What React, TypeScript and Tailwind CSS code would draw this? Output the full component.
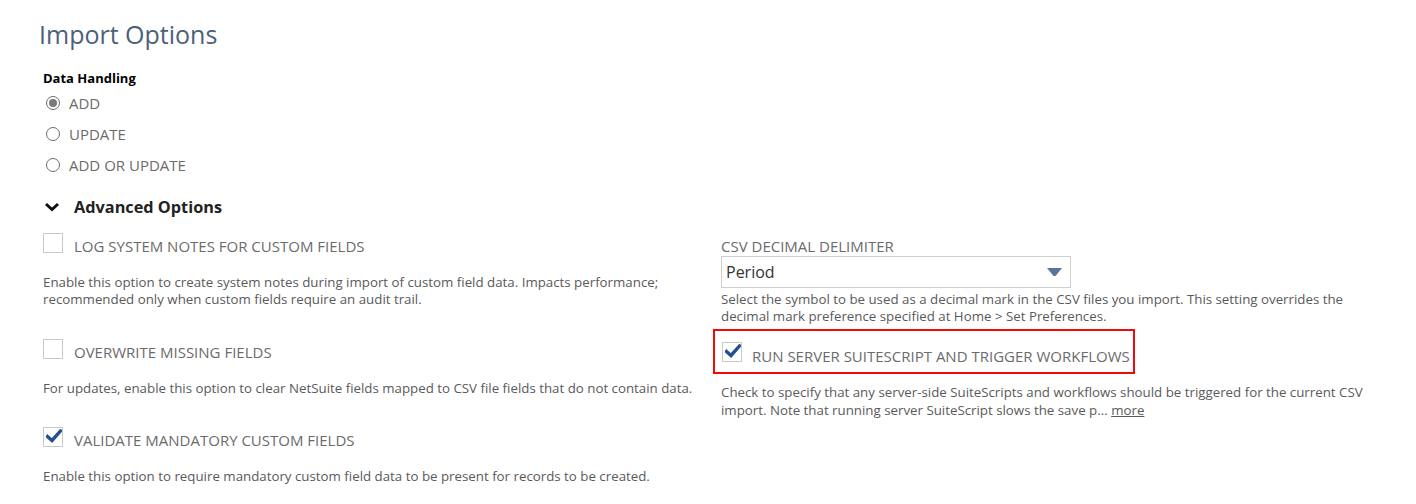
import React from "react";

const CheckIcon = () => (
  <svg width="16" height="14" viewBox="0 0 16 14" className="block">
    <path d="M1.5 7.5 L6 11.5 L14.5 2" fill="none" stroke="#245193" strokeWidth="3.4" strokeLinecap="square" strokeLinejoin="miter" />
  </svg>
);

const Checkbox = ({ checked }: { checked?: boolean }) => (
  <span className="w-[20px] h-[20px] shrink-0 border border-[#c9c9c9] bg-white flex items-start justify-center pt-[1px] pl-[1px]">
    {checked && <CheckIcon />}
  </span>
);

const Radio = ({ checked, label }: { checked?: boolean; label: string }) => (
  <div className="flex items-center h-[31px]">
    <span className="w-[14px] h-[14px] ml-[3px] rounded-full border border-[#6b6b6b] bg-white flex items-center justify-center">
      {checked && <span className="w-[8px] h-[8px] rounded-full bg-[#7a7a7a]" />}
    </span>
    <span className="ml-[9px] text-[15px] text-[#6b6b6b] leading-[20px]">{label}</span>
  </div>
);

const CheckField = ({ checked, label, desc, gap }: { checked?: boolean; label: string; desc: string; gap: string }) => (
  <div className={gap}>
    <div className="flex items-start h-[26px]">
      <Checkbox checked={checked} />
      <span className="ml-[11px] text-[15px] leading-[26px] text-[#6b6b6b]">{label}</span>
    </div>
    <p className="mt-[15px] text-[13.3px] leading-[17px] text-[#5a5a5a]">{desc}</p>
  </div>
);

export default function App() {
  return (
    <div className="w-[1416px] h-[504px] bg-white overflow-hidden pl-[43px] pr-[40px]" style={{ fontFamily: '"Open Sans", sans-serif' }}>
      <h1 className="-ml-[4px] pt-[17px] text-[25px] leading-[34px] text-[#4d5f79] font-normal">Import Options</h1>

      <div className="mt-[18px] text-[13px] leading-[18px] font-bold text-black">Data Handling</div>
      <div>
        <Radio checked label="ADD" />
        <Radio label="UPDATE" />
        <Radio label="ADD OR UPDATE" />
      </div>

      <div className="flex items-center h-[24px] mt-[15px]">
        <svg width="16" height="10" viewBox="0 0 16 10" className="ml-[1px]">
          <path d="M2 2 L8 7.5 L14 2" fill="none" stroke="#111" strokeWidth="3" />
        </svg>
        <span className="ml-[14px] text-[16.3px] font-bold text-[#222]">Advanced Options</span>
      </div>

      <div className="grid grid-cols-[678px_1fr] mt-[14px]">
        <div>
          <CheckField
            gap="mb-[31px]"
            label="LOG SYSTEM NOTES FOR CUSTOM FIELDS"
            desc="Enable this option to create system notes during import of custom field data. Impacts performance; recommended only when custom fields require an audit trail."
          />
          <CheckField
            gap="mb-[30px]"
            label="OVERWRITE MISSING FIELDS"
            desc="For updates, enable this option to clear NetSuite fields mapped to CSV file fields that do not contain data."
          />
          <CheckField
            gap="mb-[30px]"
            checked
            label="VALIDATE MANDATORY CUSTOM FIELDS"
            desc="Enable this option to require mandatory custom field data to be present for records to be created."
          />
        </div>

        <div className="mt-[3px]">
          <div className="text-[15px] leading-[20px] text-[#6b6b6b]">CSV DECIMAL DELIMITER</div>
          <div className="w-[350px] h-[32px] border border-[#cfcfcf] flex items-center justify-between pl-[4px] pr-[8px]">
            <span className="text-[16px] text-[#333]">Period</span>
            <svg width="15" height="8" viewBox="0 0 15 8">
              <path d="M0 0 H15 L8.5 8 H6.5 Z" fill="#5a7599" />
            </svg>
          </div>
          <p className="mt-[3px] text-[13.3px] leading-[17px] text-[#5a5a5a]">
            Select the symbol to be used as a decimal mark in the CSV files you import. This setting overrides the decimal mark preference specified at Home &gt; Set Preferences.
          </p>
          <div className="-ml-[8px] mt-[4px] w-[422px] h-[45px] border-[2.5px] border-[#f00a0a] flex items-start pl-[7px] pt-[11px]">
            <div className="flex items-start">
              <Checkbox checked />
              <span className="ml-[10px] mt-[4px] text-[15px] leading-[20px] text-[#6b6b6b]">RUN SERVER SUITESCRIPT AND TRIGGER WORKFLOWS</span>
            </div>
          </div>
          <p className="mt-[9px] text-[13.3px] leading-[18px] text-[#5a5a5a]">
            Check to specify that any server-side SuiteScripts and workflows should be triggered for the current CSV import. Note that running server SuiteScript slows the save p...{" "}
            <span className="underline">more</span>
          </p>
        </div>
      </div>
    </div>
  );
}
